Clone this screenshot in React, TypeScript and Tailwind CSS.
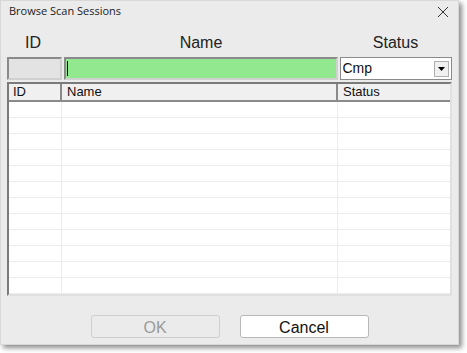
import React from "react";

const rows = Array.from({ length: 12 });

const App = () => {
  return (
    <div className="w-[467px] h-[353px] bg-white font-['Liberation_Sans',Arial,sans-serif]">
      <div className="w-[459px] h-[345px] bg-[#ebebeb] border border-[#d8d8d8] shadow-[3px_3px_5px_rgba(0,0,0,0.45)] flex flex-col">
        {/* title bar */}
        <div className="h-[21px] flex items-center justify-between pl-[8px] pr-[9px]">
          <span className="text-[11px] text-[#222] font-['Open_Sans',sans-serif]">Browse Scan Sessions</span>
          <svg width="12" height="12" viewBox="0 0 12 12" className="text-[#333]">
            <path d="M1 1L11 11M11 1L1 11" stroke="currentColor" strokeWidth="1" />
          </svg>
        </div>

        {/* column labels */}
        <div className="flex h-[35px] items-end pb-[2px] px-[6px] text-[16px] text-[#222]">
          <div className="w-[56px] pl-[18px]">ID</div>
          <div className="w-[276px] text-center">Name</div>
          <div className="flex-1 text-center">Status</div>
        </div>

        {/* filter row */}
        <div className="flex gap-[2px] px-[6px] h-[23px]">
          <div className="w-[55px] bg-[#e3e3e3] border-2 border-t-[#8a8a8a] border-l-[#8a8a8a] border-r-[#d0d0d0] border-b-[#d0d0d0]" />
          <div className="w-[275px] bg-[#92e88e] border-2 border-t-[#8a8a8a] border-l-[#8a8a8a] border-r-[#d0d0d0] border-b-[#d0d0d0] flex items-center pl-[1px]">
            <div className="w-px h-[15px] bg-black" />
          </div>
          <div className="w-[113px] bg-white border border-[#8a8a8a] flex items-center justify-between pl-[2px] pr-[2px] text-[14px] text-[#111]">
            <span>Cmp</span>
            <div className="w-[15px] h-[16px] bg-[#f0f0f0] border border-[#b0b0b0] flex items-center justify-center">
              <svg width="7" height="4" viewBox="0 0 7 4">
                <path d="M0 0H7L3.5 4Z" fill="#000" />
              </svg>
            </div>
          </div>
        </div>

        {/* grid */}
        <div className="mx-[6px] mt-[2px] h-[214px] bg-white border-2 border-t-[#7a7a7a] border-l-[#7a7a7a] border-r-[#e0e0e0] border-b-[#e0e0e0] flex flex-col overflow-hidden">
          <div className="flex h-[18px] text-[13px] text-[#111] shrink-0">
            <div className="w-[53px] bg-[#f0f0f0] border-r-2 border-b-2 border-[#8a8a8a] pl-[4px] leading-[16px]">ID</div>
            <div className="w-[276px] bg-[#f0f0f0] border-r-2 border-b-2 border-[#8a8a8a] pl-[5px] leading-[16px]">Name</div>
            <div className="flex-1 bg-[#f0f0f0] border-b-2 border-[#8a8a8a] pl-[5px] leading-[16px]">Status</div>
          </div>
          {rows.map((_, i) => (
            <div key={i} className="flex h-[16px] shrink-0 border-b border-[#ececec]">
              <div className="w-[53px] border-r border-[#ececec]" />
              <div className="w-[276px] border-r border-[#ececec]" />
              <div className="flex-1" />
            </div>
          ))}
        </div>

        {/* buttons */}
        <div className="flex justify-center gap-[20px] mt-[19px] text-[16px]">
          <button className="w-[129px] h-[23px] rounded-[3px] border border-[#cfcfcf] bg-[#ebebeb] text-[#9a9a9a]">OK</button>
          <button className="w-[129px] h-[23px] rounded-[3px] border border-[#b8b8b8] bg-white text-[#111]">Cancel</button>
        </div>
      </div>
    </div>
  );
};

export default App;
